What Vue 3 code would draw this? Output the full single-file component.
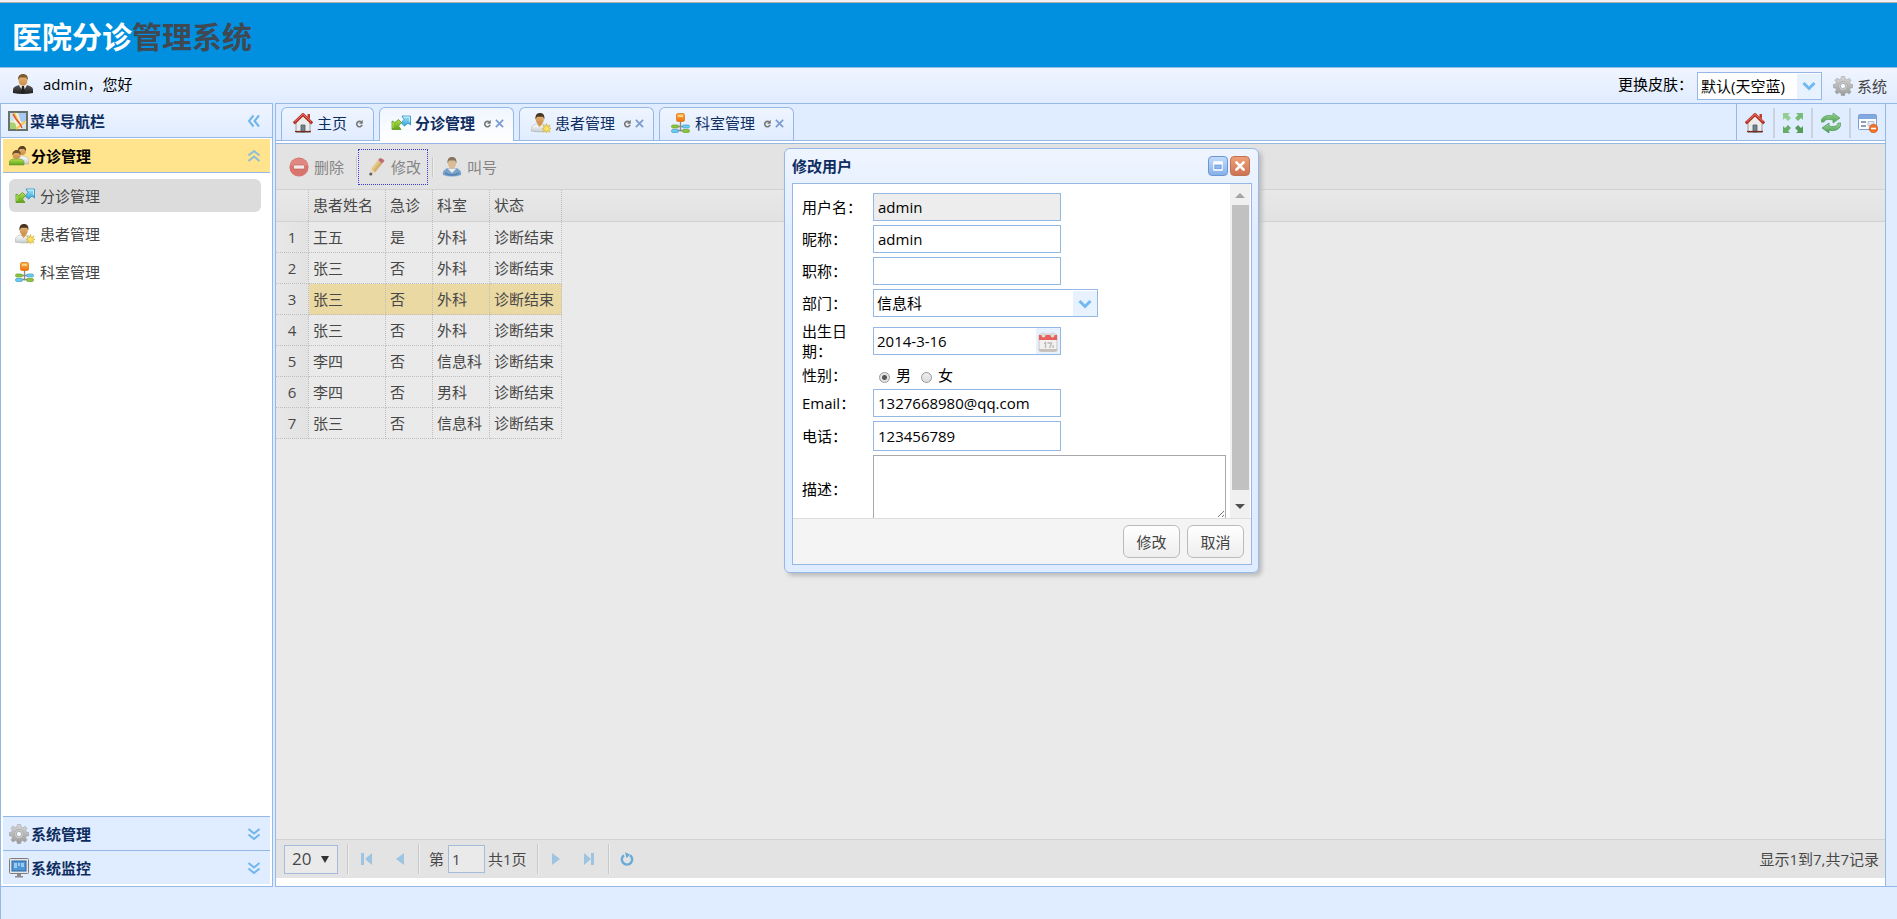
<script setup>
import { ref } from 'vue'

const menu = [
  { icon: 'arrows', label: '分诊管理', active: true },
  { icon: 'patient', label: '患者管理', active: false },
  { icon: 'depart', label: '科室管理', active: false },
]
const collapsed = [
  { icon: 'gear', label: '系统管理' },
  { icon: 'monitor', label: '系统监控' },
]
const tabs = [
  { icon: 'home', label: '主页', closable: false, active: false },
  { icon: 'arrows', label: '分诊管理', closable: true, active: true },
  { icon: 'patient', label: '患者管理', closable: true, active: false },
  { icon: 'depart', label: '科室管理', closable: true, active: false },
]
const tools = [
  { icon: 'home', label: '主页' },
  { icon: 'expand', label: '全屏' },
  { icon: 'refresh', label: '刷新' },
  { icon: 'closeall', label: '关闭' },
]
const rows = [
  ['王五', '是', '外科', '诊断结束'],
  ['张三', '否', '外科', '诊断结束'],
  ['张三', '否', '外科', '诊断结束'],
  ['张三', '否', '外科', '诊断结束'],
  ['李四', '否', '信息科', '诊断结束'],
  ['李四', '否', '男科', '诊断结束'],
  ['张三', '否', '信息科', '诊断结束'],
]
const selectedRow = 2
const form = ref({
  user: 'admin',
  nick: 'admin',
  title: '',
  birth: '2014-3-16',
  sex: 'm',
  email: '1327668980@qq.com',
  tel: '123456789',
  desc: '',
})
const page = ref('1')
</script>

<template>
  <div class="app">
    <svg class="defs" aria-hidden="true">
      <defs>
        <linearGradient id="gBlue" x1="0" y1="0" x2="0" y2="1"><stop offset="0" stop-color="#a9e4fa" /><stop offset="1" stop-color="#2fa4d8" /></linearGradient>
        <linearGradient id="gGreen" x1="0" y1="0" x2="0" y2="1"><stop offset="0" stop-color="#b4e04a" /><stop offset="1" stop-color="#5fa31c" /></linearGradient>
        <linearGradient id="gOrange" x1="0" y1="0" x2="0" y2="1"><stop offset="0" stop-color="#ffb648" /><stop offset="1" stop-color="#ee6f0c" /></linearGradient>
        <linearGradient id="gSuit" x1="0" y1="0" x2="0" y2="1"><stop offset="0" stop-color="#5a5a5a" /><stop offset="1" stop-color="#1c1c1c" /></linearGradient>
        <linearGradient id="gCoat" x1="0" y1="0" x2="0" y2="1"><stop offset="0" stop-color="#ffffff" /><stop offset="1" stop-color="#c3cbd0" /></linearGradient>
        <linearGradient id="gSkin" x1="0" y1="0" x2="0" y2="1"><stop offset="0" stop-color="#e8b878" /><stop offset="1" stop-color="#c98d48" /></linearGradient>
        <linearGradient id="gGear" x1="0" y1="0" x2="0" y2="1"><stop offset="0" stop-color="#d6d6d6" /><stop offset="1" stop-color="#9a9a9a" /></linearGradient>
        <linearGradient id="gSync" x1="0" y1="0" x2="0" y2="1"><stop offset="0" stop-color="#9bd39a" /><stop offset="1" stop-color="#4d9f50" /></linearGradient>
      </defs>
      <symbol id="i-admin" viewBox="0 0 20 20">
        <path d="M0 19v-3c0-3 3-4 6-5h8c3 1 6 2 6 5v3q-10 2-20 0z" fill="url(#gSuit)" />
        <path d="M6 11l4 7 4-7-4-1z" fill="#f4f4f4" /><path d="M9 12h2l1 5-2 2-2-2z" fill="#222" />
        <ellipse cx="10" cy="6.5" rx="4.400" ry="5.300" fill="url(#gSkin)" />
        <path d="M5.200 6C4.600 2 7 0 10 0s5.400 2 4.800 6L13 3.500H7z" fill="#7b5a2e" />
      </symbol>
      <symbol id="i-map" viewBox="0 0 20 20">
        <rect x="1" y="1" width="18" height="18" fill="#f5f1d8" stroke="#66736b" stroke-width="2" />
        <path d="M2 2h4v8H2z" fill="#cfe0ef" /><path d="M10 2h8v9h-5z" fill="#a9c9f0" /><path d="M2 11l5 1 2 6H2z" fill="#a9cf74" /><path d="M13 13l5-1v6h-5z" fill="#d9e3ee" />
        <path d="M18 10L8 18M6 2l5 10" stroke="#f6c850" stroke-width="2" fill="none" />
        <path d="M5 3l3 5 4 5 2 4" stroke="#e0563c" stroke-width="1.500" fill="none" />
      </symbol>
      <symbol id="i-users" viewBox="0 0 20 20">
        <path d="M9 17c-1-5 1-7 4-7s7 1 7 5v3H10z" fill="url(#gCoat)" stroke="#aaa" stroke-width=".6" />
        <circle cx="13" cy="5" r="4" fill="url(#gSkin)" /><path d="M8.800 5c0-3.500 2-5 4.500-5s4.300 2 3.700 5l-2-2h-4z" fill="#5c4224" />
        <path d="M0 19v-2c0-3 3-4 5-4h5c3 0 5 1 5 4v2z" fill="url(#gGreen)" stroke="#6c9430" stroke-width=".6" />
        <circle cx="7.500" cy="9" r="4" fill="url(#gSkin)" /><path d="M3.300 9c0-3.500 2-5 4.500-5s4.300 2 3.700 5l-2-2h-4z" fill="#6b4d29" />
      </symbol>
      <symbol id="i-arrows" viewBox="0 0 20 20">
        <path d="M11 3h8.500v9L17 10l-3.500 3-3.300-3L13 6.500z" fill="url(#gBlue)" stroke="#2a8fc0" stroke-width=".8" />
        <path d="M12.500 4h6v5" fill="none" stroke="#d2f2fd" stroke-width=".8" />
        <path d="M1 8l3 1.500L7.500 6.500l3 3L7.500 13l2.500 3.500H1z" fill="url(#gGreen)" stroke="#5b9a20" stroke-width=".8" />
        <path d="M2 9.500V15" fill="none" stroke="#c8ec74" stroke-width=".8" />
      </symbol>
      <symbol id="i-patient" viewBox="0 0 20 20">
        <path d="M0 18c-.5-4 2-6 5-7h7c3 1 5 3 4.500 7q-8 2-16.500 0z" fill="url(#gCoat)" stroke="#a9b0b4" stroke-width=".6" />
        <path d="M6 11l2.500 3 3-3z" fill="#d59a58" />
        <ellipse cx="8.800" cy="6.500" rx="4" ry="5" fill="url(#gSkin)" /><path d="M4.500 6.500C4 2 6 0 9 0s5 2 4.300 6.500L12 3.800H6z" fill="#4a3420" />
        <path d="M15.500 10.500l1 3 2.600-1.600-1.400 2.600 2.300 1-2.300 1 1.400 2.700-2.600-1.500-1 2.300-1-2.300-2.700 1.500 1.500-2.700-2.300-1 2.300-1-1.500-2.600 2.700 1.600z" fill="#fbe264" stroke="#c9a72b" stroke-width=".6" />
      </symbol>
      <symbol id="i-depart" viewBox="0 0 20 20">
        <path d="M9.500 8v10.500M5 13.500h9M5 17.500h9" stroke="#8a8a8a" stroke-width="1.300" fill="none" />
        <rect x="5.500" y=".5" width="8" height="8" rx="1.500" fill="url(#gOrange)" stroke="#e07a18" stroke-width=".8" />
        <path d="M7 2h5v2H7z" fill="#ffcf86" />
        <rect x=".5" y="12" width="7" height="3" rx="1.400" fill="#8cc43c" stroke="#6ea033" stroke-width=".7" />
        <rect x="11.500" y="12" width="7" height="3" rx="1.400" fill="#6ccbf0" stroke="#3f9dc8" stroke-width=".7" />
        <rect x=".5" y="16.500" width="7" height="3" rx="1.400" fill="#6ccbf0" stroke="#3f9dc8" stroke-width=".7" />
        <rect x="11.500" y="16.500" width="7" height="3" rx="1.400" fill="#8cc43c" stroke="#6ea033" stroke-width=".7" />
      </symbol>
      <symbol id="i-gear" viewBox="0 0 20 20">
        <path d="M8.300.5h3.400l.5 2.600 1.700.7L16.100 2.300l2 2-1.500 2.200.7 1.600 2.400.4v3.200l-2.400.5-.7 1.600 1.500 2.200-2.200 2.100-2.100-1.500-1.700.7-.5 2.400H8.400L7.900 17.300l-1.700-.7-2.200 1.500L1.900 16l1.500-2.200-.7-1.600L.3 11.700V8.500l2.400-.5.7-1.600L1.900 4.200 4.100 2.100l2.100 1.500 1.700-.7z" fill="url(#gGear)" stroke="#9a9a9a" stroke-width=".5" />
        <circle cx="10" cy="10" r="4.600" fill="#c9c9c9" stroke="#a2a2a2" stroke-width=".6" /><circle cx="10" cy="10" r="2.600" fill="#f4f8ff" stroke="#909090" stroke-width=".6" />
      </symbol>
      <symbol id="i-monitor" viewBox="0 0 20 20">
        <rect x=".5" y=".5" width="19" height="15" rx="1" fill="#e6e6e6" stroke="#7e7e7e" />
        <rect x="3" y="3" width="14" height="10" fill="#4f97d6" stroke="#2c67a6" /><path d="M5 5h3v5H5zM9 5h2v3H9zM12 5h3v4h-3z" fill="#9ccbf0" />
        <path d="M8 16h4v2h2v1.500H6V18h2z" fill="#8c8c8c" />
      </symbol>
      <symbol id="i-home" viewBox="0 0 20 20">
        <path d="M3 10l7-7 7 7v9.500H3z" fill="#ececec" stroke="#8a8a8a" stroke-width=".8" />
        <path d="M14.500 1H17v5l-2.500-2z" fill="#c43c2e" />
        <path d="M8 12h4v7H8z" fill="#73828c" stroke="#4f5a60" stroke-width=".8" />
        <path d="M2 18.500h16" stroke="#7a2a20" stroke-width="1.200" />
        <path d="M.8 10.300L10 1.500l9.200 8.800" fill="none" stroke="#b73327" stroke-width="3" stroke-linejoin="round" /><path d="M2 8.600L10 1.200l8 7.400" fill="none" stroke="#e9776a" stroke-width="1" />
      </symbol>
      <symbol id="i-expand" viewBox="0 0 20 20">
        <path d="M0 0h7L5 2l3 3-3 3-3-3-2 2z" fill="#93cf92" /><path d="M20 0h-7l2 2-3 3 3 3 3-3 2 2z" fill="#79bb79" />
        <path d="M0 20h7l-2-2 3-3-3-3-3 3-2-2z" fill="#66ae67" /><path d="M20 20h-7l2-2-3-3 3-3 3 3 2-2z" fill="#559d57" />
      </symbol>
      <symbol id="i-refresh" viewBox="0 0 20 20">
        <path d="M0 9c0-5 6-8 12-6V0l7 5-7 5V7C8 6 4 6 3 9z" fill="url(#gSync)" stroke="#5ba35d" stroke-width=".7" />
        <path d="M20 10c0 6-6 9-12 7v3l-7-5 7-5v3c4 1 8 1 9-3z" fill="url(#gSync)" stroke="#4b9350" stroke-width=".7" />
      </symbol>
      <symbol id="i-closeall" viewBox="0 0 20 20">
        <rect x=".5" y="1.500" width="18" height="15" rx="1" fill="#fbfcff" stroke="#7f9fce" /><path d="M1 2h17v4H1z" fill="#7fa9e0" />
        <path d="M3 9h5M3 13h5" stroke="#6f7f99" stroke-width="1.600" /><path d="M10 8.500h6v4h-6z" fill="#e3e8f2" stroke="#a5b3cb" stroke-width=".8" />
        <circle cx="15.500" cy="15.500" r="4.300" fill="#ef7028" stroke="#cf5310" stroke-width=".6" /><path d="M13 15.500h5" stroke="#fff" stroke-width="1.600" />
      </symbol>
      <symbol id="i-delete" viewBox="0 0 20 20">
        <circle cx="10" cy="10" r="9.600" fill="#d9746e" /><path d="M1 8a9.500 9.500 0 0118 0q-9 3-18 0z" fill="#e2908a" opacity=".7" />
        <rect x="4.500" y="8" width="11" height="4" rx="1" fill="#f3e9e8" stroke="#bb5c56" stroke-width=".6" />
      </symbol>
      <symbol id="i-pencil" viewBox="0 0 20 20">
        <path d="M4 12L11 3l4 3L8 15.500z" fill="#e6c680" /><path d="M6 13.500L13 4.500l2.500 2L8 15.500z" fill="#d6ad5e" />
        <path d="M11 3l2-2q3.500.5 4.500 3L15 6.500z" fill="#b9606a" /><path d="M4 12l4 3.500L3.500 18z" fill="#ead8b8" /><circle cx="3.800" cy="17" r="1.600" fill="#555" />
      </symbol>
      <symbol id="i-call" viewBox="0 0 20 20">
        <path d="M1 18c-1-4 2-6 5-7h8c3 1 6 3 5 7q-9 3-18 0z" fill="#6e9bcb" /><path d="M5.500 11.500L10 16l4.500-4.500z" fill="#f1efe9" />
        <path d="M3 16q7 4 14 0" fill="none" stroke="#4577ad" stroke-width="1.500" />
        <ellipse cx="10" cy="6.500" rx="4" ry="5.200" fill="#d8b78d" /><path d="M5.600 6.500C5 2 7 0 10 0s5 2 4.400 6.500L13 3.500H7z" fill="#7d6850" />
      </symbol>
      <symbol id="i-calendar" viewBox="0 0 20 20">
        <rect x="1" y="2" width="18" height="17.500" rx="1.500" fill="#f3f1ef" stroke="#c9c5c1" /><path d="M1 3h18v5H1z" fill="#e7605c" />
        <path d="M1 18h18" stroke="#c5c0bb" stroke-width="2" />
        <rect x="3.500" y="0" width="4" height="5.500" rx="2" fill="#d9d9d9" /><rect x="12.500" y="0" width="4" height="5.500" rx="2" fill="#d9d9d9" />
        <path d="M6 11.500l1.500-1V16M9.500 11h4L11.500 16M15 13v3" fill="none" stroke="#bdbab7" stroke-width="1.400" />
      </symbol>
      <symbol id="i-chev2" viewBox="0 0 14 14">
        <path d="M1.500 2l5.500 4.500L12.500 2M1.500 7.500L7 12l5.500-4.500" fill="none" stroke="#70b5ec" stroke-width="2" />
      </symbol>
      <symbol id="i-reload" viewBox="0 0 10 10">
        <path d="M7.800 6.500A3 3 0 117 3.500" fill="none" stroke="#777" stroke-width="1.800" /><path d="M8.600.8v4.400H4.400z" fill="#777" />
      </symbol>
      <symbol id="i-x" viewBox="0 0 10 10"><path d="M1 1l8 8M9 1L1 9" stroke="#7c9dd0" stroke-width="2" /></symbol>
      <symbol id="i-down" viewBox="0 0 14 10"><path d="M1.500 2L7 7.500 12.500 2" fill="none" stroke="#70b9f2" stroke-width="3" /></symbol>
    </svg>

    <header class="banner"><h1><span>医院分诊</span>管理系统</h1></header>

    <div class="userbar">
      <div class="user"><svg class="ic"><use href="#i-admin" /></svg><span>admin，您好</span></div>
      <label class="skin-label" for="skin">更换皮肤：</label>
      <span class="combo skin">
        <select id="skin"><option>默认(天空蓝)</option></select>
        <span class="combo-arrow"><svg><use href="#i-down" /></svg></span>
      </span>
      <button class="sys" type="button"><svg class="ic"><use href="#i-gear" /></svg>系统</button>
    </div>

    <div class="main">
      <aside class="west">
        <div class="west-head">
          <svg class="ic"><use href="#i-map" /></svg><span>菜单导航栏</span>
          <button type="button" class="chev left" aria-label="折叠"><svg><use href="#i-chev2" /></svg></button>
        </div>
        <div class="accordion">
          <div class="acc-head open">
            <svg class="ic"><use href="#i-users" /></svg><span>分诊管理</span>
            <button type="button" class="chev up" aria-label="收起"><svg><use href="#i-chev2" /></svg></button>
          </div>
          <nav class="menu">
            <a v-for="m in menu" :key="m.label" href="#" :class="{ active: m.active }">
              <svg class="ic"><use :href="'#i-' + m.icon" /></svg>{{ m.label }}
            </a>
          </nav>
          <div v-for="c in collapsed" :key="c.label" class="acc-head">
            <svg class="ic"><use :href="'#i-' + c.icon" /></svg><span>{{ c.label }}</span>
            <button type="button" class="chev" aria-label="展开"><svg><use href="#i-chev2" /></svg></button>
          </div>
        </div>
      </aside>

      <section class="center">
        <div class="tabbar">
          <div class="tabs">
            <div v-for="t in tabs" :key="t.label" class="tab" :class="{ active: t.active }">
              <svg class="ic"><use :href="'#i-' + t.icon" /></svg><span>{{ t.label }}</span>
              <button type="button" class="mini" aria-label="刷新"><svg><use href="#i-reload" /></svg></button>
              <button v-if="t.closable" type="button" class="mini close" aria-label="关闭"><svg><use href="#i-x" /></svg></button>
            </div>
          </div>
          <div class="tools">
            <button v-for="t in tools" :key="t.label" type="button" :aria-label="t.label"><svg class="ic"><use :href="'#i-' + t.icon" /></svg></button>
          </div>
        </div>

        <div class="workspace">
          <div class="toolbar">
            <button type="button"><svg class="ic"><use href="#i-delete" /></svg>删除</button>
            <i class="sep"></i>
            <button type="button" class="focused"><svg class="ic"><use href="#i-pencil" /></svg>修改</button>
            <i class="sep"></i>
            <button type="button"><svg class="ic"><use href="#i-call" /></svg>叫号</button>
          </div>
          <div class="grid-head">
            <table>
              <colgroup><col class="c0" /><col class="c1" /><col class="c2" /><col class="c3" /><col class="c4" /></colgroup>
              <thead><tr><th></th><th>患者姓名</th><th>急诊</th><th>科室</th><th>状态</th></tr></thead>
            </table>
          </div>
          <div class="grid-body">
            <table>
              <colgroup><col class="c0" /><col class="c1" /><col class="c2" /><col class="c3" /><col class="c4" /></colgroup>
              <tbody>
                <tr v-for="(r, i) in rows" :key="i" :class="{ selected: i === selectedRow }">
                  <td class="num">{{ i + 1 }}</td>
                  <td v-for="(c, j) in r" :key="j">{{ c }}</td>
                </tr>
              </tbody>
            </table>
          </div>
          <div class="pager">
            <span class="size"><select aria-label="每页条数"><option>20</option></select><i></i></span>
            <i class="sep"></i>
            <button type="button" aria-label="首页"><svg viewBox="0 0 12 14"><path d="M0 1h3v12H0zM11 1v12L4 7z" /></svg></button>
            <button type="button" aria-label="上一页"><svg viewBox="0 0 12 14"><path d="M10 1v12L2 7z" /></svg></button>
            <i class="sep"></i>
            <label for="pg">第</label><input id="pg" v-model="page" type="text" /><span class="total">共1页</span>
            <i class="sep"></i>
            <button type="button" aria-label="下一页"><svg viewBox="0 0 12 14"><path d="M2 1v12l8-6z" /></svg></button>
            <button type="button" aria-label="末页"><svg viewBox="0 0 12 14"><path d="M1 1v12l7-6zM8 1h3v12H8z" /></svg></button>
            <i class="sep"></i>
            <button type="button" aria-label="刷新" class="reload"><svg viewBox="0 0 14 14"><path d="M4 3.200A5.200 5.200 0 1010 3.200" fill="none" stroke="#68abd9" stroke-width="2.400" /><path d="M5 .2l5 2.400-3.500 3.600z" fill="#68abd9" /></svg></button>
            <span class="info">显示1到7,共7记录</span>
          </div>
        </div>

        <form class="dialog" role="dialog" aria-label="修改用户" @submit.prevent>
          <div class="dlg-head">
            <span>修改用户</span>
            <button type="button" class="wbtn" aria-label="最大化"><svg viewBox="0 0 20 20"><rect x="5.500" y="5.500" width="9" height="9" fill="#f7fbff" stroke="#fff" stroke-width="1.500" /><rect x="6.500" y="9" width="7" height="4" fill="#8fb8ee" stroke="#6e9bdc" /></svg></button>
            <button type="button" class="wbtn red" aria-label="关闭"><svg viewBox="0 0 20 20"><path d="M6 6l8 8M14 6l-8 8" stroke="#fff" stroke-width="3" stroke-linecap="round" /></svg></button>
          </div>
          <div class="dlg-frame">
            <div class="dlg-body">
              <div class="fields">
                <label for="f1">用户名：</label><input id="f1" v-model="form.user" type="text" readonly />
                <label for="f2">昵称：</label><input id="f2" v-model="form.nick" type="text" />
                <label for="f3">职称：</label><input id="f3" v-model="form.title" type="text" />
                <label for="f4">部门：</label>
                <span class="combo dept">
                  <select id="f4"><option>信息科</option></select>
                  <span class="combo-arrow"><svg><use href="#i-down" /></svg></span>
                </span>
                <label for="f5" class="two">出生日期：</label>
                <span class="date"><input id="f5" v-model="form.birth" type="text" /><button type="button" aria-label="选择日期"><svg><use href="#i-calendar" /></svg></button></span>
                <span>性别：</span>
                <span class="radios"><label><input v-model="form.sex" type="radio" name="sex" value="m" />男</label><label><input v-model="form.sex" type="radio" name="sex" value="f" />女</label></span>
                <label for="f6">Email：</label><input id="f6" v-model="form.email" type="text" />
                <label for="f7">电话：</label><input id="f7" v-model="form.tel" type="text" class="tall" />
                <label for="f8">描述：</label><textarea id="f8" v-model="form.desc"></textarea>
              </div>
              <div class="scroll" aria-hidden="true"><i class="up"></i><b></b><i class="down"></i></div>
              <svg class="grip" viewBox="0 0 8 8" aria-hidden="true"><path d="M1 7L7 1M5 7l2-2" stroke="#777" /></svg>
            </div>
            <div class="dlg-foot"><button type="submit">修改</button><button type="button">取消</button></div>
          </div>
        </form>
      </section>
      <div class="east"></div>
    </div>
    <footer class="south"></footer>
  </div>
</template>

<style>
body {
  margin: 0;
}
</style>

<style scoped>
.app {
  display: flex;
  flex-direction: column;
  min-height: 100vh;
  background: #e0ecff;
  color: #000;
  font: 15px/20px "Open Sans", "Noto Sans CJK SC", sans-serif;
}
.app *,
.app *::before,
.app *::after {
  box-sizing: border-box;
}
button,
input,
select,
textarea {
  margin: 0;
  color: inherit;
  font: inherit;
}
button {
  padding: 0;
  border: 0;
  background: none;
}
svg {
  display: block;
  flex: none;
}
.defs {
  position: absolute;
  width: 0;
  height: 0;
}
.ic {
  width: 20px;
  height: 20px;
}
.banner {
  height: 67px;
  border-top: 2px solid #f1f1f1;
  background: #0190e0;
  box-shadow: inset 0 1px #b5b0b0;
  padding: 13px 12px;
}
.banner h1 {
  margin: 0;
  font-size: 30px;
  line-height: 44px;
  font-weight: bold;
  color: #404852;
}
.banner h1 span {
  color: #fff;
}
.userbar {
  display: flex;
  align-items: center;
  height: 36px;
  padding: 0 10px 0 13px;
  border-top: 1px solid #95b8e7;
  background: linear-gradient(#eff5ff, #e0ecff);
}
.user {
  display: flex;
  flex: 1;
  gap: 10px;
  padding-bottom: 3px;
}
.skin-label {
  padding-bottom: 3px;
}
.combo {
  display: flex;
  height: 28px;
  border: 1px solid #95b8e7;
  background: #fff;
}
.combo select {
  flex: 1;
  min-width: 0;
  padding: 0 3px;
  border: 0;
  background: none;
  appearance: none;
  outline: none;
}
.combo-arrow {
  display: flex;
  align-items: center;
  justify-content: center;
  width: 24px;
  margin-top: 1px;
  background: #e8f1fe;
  pointer-events: none;
}
.combo-arrow svg {
  width: 14px;
  height: 10px;
}
.skin {
  width: 125px;
  margin-left: 4px;
}
.sys {
  display: flex;
  align-items: center;
  gap: 4px;
  margin-left: 11px;
  color: #444;
}
.main {
  display: flex;
  flex: 1;
}
.west {
  display: flex;
  flex-direction: column;
  width: 273px;
  border: 1px solid #95b8e7;
}
.west-head {
  display: flex;
  align-items: center;
  gap: 2px;
  height: 34px;
  padding: 0 11px 0 7px;
  border-bottom: 1px solid #95b8e7;
  background: linear-gradient(#eff5ff, #e0ecff);
  color: #0e2d5f;
  font-weight: bold;
}
.west-head span,
.acc-head span {
  flex: 1;
}
.chev svg {
  width: 14px;
  height: 14px;
}
.chev.left svg {
  transform: rotate(90deg);
}
.chev.up svg {
  transform: rotate(180deg);
}
.accordion {
  display: flex;
  flex: 1;
  flex-direction: column;
  padding: 1px 2px 2px;
  background: #fff;
}
.acc-head {
  display: flex;
  align-items: center;
  gap: 2px;
  height: 34px;
  padding: 0 9px 0 6px;
  border-top: 1px solid #95b8e7;
  background: #e0ecff;
  color: #0e2d5f;
  font-weight: bold;
}
.acc-head.open {
  border-top: 0;
  border-bottom: 1px solid #95b8e7;
  background: #ffe48d;
  color: #000;
}
.acc-head.open .chev {
  opacity: 0.8;
}
.menu {
  display: flex;
  flex: 1;
  flex-direction: column;
  gap: 5px;
  padding: 6px 9px 6px 6px;
}
.menu a {
  display: flex;
  align-items: center;
  gap: 5px;
  height: 33px;
  padding: 0 6px;
  border-radius: 6px;
  color: #444;
  text-decoration: none;
}
.menu a.active {
  background: #dcdcdc;
}
.center {
  position: relative;
  display: flex;
  flex: 1;
  flex-direction: column;
  min-width: 0;
  margin-left: 2px;
  padding-bottom: 8px;
  border: 1px solid #95b8e7;
  background: #fff;
}
.tabbar {
  display: flex;
  justify-content: space-between;
  height: 40px;
  padding-bottom: 2px;
  border-bottom: 1px solid #95b8e7;
}
.tabs {
  display: flex;
  flex: 1;
  gap: 5px;
  padding: 3px 5px 0;
  border-bottom: 1px solid #95b8e7;
  background: #e0ecff;
}
.tab {
  display: flex;
  align-items: center;
  height: 33px;
  padding: 0 9px 2px 11px;
  border: 1px solid #95b8e7;
  border-bottom: 0;
  border-radius: 6px 6px 0 0;
  background: linear-gradient(#eff5ff, #e0ecff);
  color: #0e2d5f;
}
.tab.active {
  height: 34px;
  padding-bottom: 3px;
  background: linear-gradient(#eff5ff, #fff);
  font-weight: bold;
}
.tab span {
  margin: 0 8px 0 4px;
}
.mini svg {
  width: 9px;
  height: 9px;
}
.mini.close {
  margin-left: 3px;
}
.tools {
  display: flex;
  padding: 4px 0 0;
  border-left: 1px solid #95b8e7;
  border-bottom: 1px solid #95b8e7;
  background: #e0ecff;
}
.tools button {
  display: flex;
  align-items: center;
  justify-content: center;
  width: 38px;
  height: 30px;
  border-left: 2px solid #ccd2dc;
}
.tools button:first-child {
  width: 36px;
  border-left: 0;
}
.tools button:last-child {
  width: 36px;
}
.workspace {
  display: flex;
  flex: 1;
  flex-direction: column;
  background: #eaeaea;
  color: #484848;
}
.toolbar {
  display: flex;
  align-items: center;
  height: 46px;
  padding: 0 5px;
  border-bottom: 1px solid #d2d2d2;
  background: #e3e3e3;
}
.toolbar button {
  display: flex;
  align-items: center;
  gap: 5px;
  height: 36px;
  padding: 0 8px;
  color: #858585;
}
.toolbar .focused {
  gap: 4px;
  padding: 0 6px 0 8px;
  border: 1px dotted #3b3bd6;
}
.toolbar .sep + button .ic {
  opacity: 0.9;
}
.sep {
  width: 2px;
  height: 30px;
  border-left: 1px solid #c8c8c8;
  border-right: 1px solid #eee;
}
.toolbar .sep {
  height: 20px;
  margin: 0 0 0 4px;
}
.grid-head {
  height: 32px;
  border-bottom: 1px solid #d2d2d2;
  background: linear-gradient(#e8e8e8, #e2e2e2);
}
.grid-body {
  flex: 1;
}
table {
  table-layout: fixed;
  width: 286px;
  border-collapse: separate;
  border-spacing: 0;
}
.c0 {
  width: 33px;
}
.c1 {
  width: 77px;
}
.c2 {
  width: 47px;
}
.c3 {
  width: 57px;
}
.c4 {
  width: 72px;
}
th,
td {
  height: 31px;
  padding: 0 0 1px 4px;
  border-right: 1px dotted #bdbdbd;
  text-align: left;
  font-weight: normal;
  white-space: nowrap;
}
td {
  border-bottom: 1px dotted #bdbdbd;
}
.num {
  padding: 0 0 1px;
  text-align: center;
  background: linear-gradient(90deg, #e8e8e8, #e2e2e2);
}
.selected td:not(.num) {
  background: #ebd9a4;
}
.pager {
  display: flex;
  align-items: center;
  height: 39px;
  padding: 0 6px 0 8px;
  border-top: 1px solid #d2d2d2;
  background: #e3e3e3;
}
.pager button {
  display: flex;
  align-items: center;
  justify-content: center;
  width: 33px;
  height: 30px;
}
.pager button svg {
  width: 12px;
  height: 14px;
  fill: #9dc4e0;
}
.pager .reload svg {
  width: 14px;
}
.pager .sep {
  margin: 0 1px 0 2px;
}
.size {
  display: flex;
  align-items: center;
  width: 54px;
  height: 29px;
  margin-right: 7px;
  border: 1px solid #a6bbdb;
  background: #eaeaea;
}
.size select {
  flex: 1;
  min-width: 0;
  padding: 0 0 0 7px;
  border: 0;
  background: none;
  appearance: none;
  outline: none;
  font-size: 17px;
}
.size i {
  margin-right: 8px;
  border: 4px solid transparent;
  border-top: 7px solid #333;
  border-bottom: 0;
}
.pager label {
  margin: 0 4px 0 8px;
}
.pager input {
  width: 37px;
  height: 28px;
  padding: 0 3px;
  border: 1px solid #a6bbdb;
  background: #eaeaea;
}
.total {
  margin: 0 8px 0 3px;
}
.info {
  margin-left: auto;
}
.east {
  width: 11px;
  border-top: 1px solid #95b8e7;
  border-bottom: 1px solid #95b8e7;
}
.south {
  height: 32px;
  border-left: 1px solid #95b8e7;
}
.dialog {
  position: absolute;
  left: 508px;
  top: 44px;
  width: 475px;
  padding: 0 6px 7px 7px;
  border: 1px solid #95b8e7;
  border-radius: 6px;
  background: linear-gradient(#eff5ff, #e0ecff 20%);
  box-shadow: 3px 3px 4px #bbb;
}
.dlg-head {
  display: flex;
  align-items: center;
  gap: 2px;
  height: 34px;
  color: #0e2d5f;
  font-weight: bold;
}
.dlg-head span {
  flex: 1;
  padding-bottom: 1px;
}
.wbtn {
  width: 20px;
  height: 20px;
  border: 1px solid #6a97d6;
  border-radius: 4px;
  background: linear-gradient(#c3dbfa, #86b0ea);
}
.wbtn svg {
  width: 18px;
  height: 18px;
}
.wbtn.red {
  margin-right: 2px;
  border-color: #bf7155;
  background: linear-gradient(#f0a078, #cd7355);
}
.dlg-frame {
  border: 1px solid #95b8e7;
}
.dlg-body {
  position: relative;
  display: flex;
  height: 334px;
  overflow: hidden;
  background: #fff;
}
.fields {
  display: grid;
  flex: 1;
  grid-template-columns: 71px 1fr;
  grid-template-rows: 28px 28px 28px 28px 40px 20px 28px 30px 68px;
  row-gap: 4px;
  align-items: center;
  padding: 9px 4px 0 9px;
}
.fields > label,
.fields > span:not([class]) {
  white-space: nowrap;
}
.fields > .two {
  width: 48px;
  white-space: normal;
}
.fields input[type="text"] {
  width: 188px;
  height: 28px;
  padding: 0 4px;
  border: 1px solid #95b8e7;
  background: #fff;
  outline: none;
}
.fields input[readonly] {
  background: #ededed;
}
.fields input.tall {
  height: 30px;
}
.dept {
  width: 225px;
}
.date {
  display: flex;
  width: 188px;
  height: 28px;
  border: 1px solid #95b8e7;
}
.fields .date input {
  flex: 1;
  min-width: 0;
  height: 26px;
  padding: 0 3px;
  border: 0;
}
.date button {
  width: 24px;
  padding: 3px 2px 2px;
  background: #e8f1fe;
}
.date button svg {
  width: 20px;
  height: 20px;
}
.radios {
  display: flex;
  gap: 10px;
  padding-left: 6px;
}
.radios label {
  display: flex;
  align-items: center;
  gap: 6px;
}
.radios input {
  width: 11px;
  height: 11px;
  margin-top: 4px;
  border: 1px solid #999;
  border-radius: 50%;
  background: linear-gradient(#eee, #dcdcdc);
  appearance: none;
}
.radios input:checked {
  background: radial-gradient(circle, #555 2px, #e4e4e4 3px);
}
.fields textarea {
  width: 100%;
  height: 68px;
  border: 1px solid #a9a9a9;
  background: #fff;
  resize: none;
  outline: none;
}
.grip {
  position: absolute;
  right: 26px;
  bottom: 0;
  width: 8px;
  height: 8px;
}
.scroll {
  display: flex;
  flex-direction: column;
  align-items: center;
  width: 20px;
  margin-right: 1px;
  background: #f0f0f0;
}
.scroll b {
  width: 17px;
  flex: 1;
  background: #c1c1c1;
}
.scroll i {
  border: 5px solid transparent;
}
.scroll .up {
  margin: 9px 0 7px;
  border-top: 0;
  border-bottom-color: #a3a3a3;
}
.scroll .down {
  margin: 14px 0 9px;
  border-bottom: 0;
  border-top-color: #505050;
}
.dlg-foot {
  display: flex;
  justify-content: flex-end;
  gap: 7px;
  height: 46px;
  padding: 6px 7px;
  border-top: 1px solid #ddd;
  background: #f4f4f4;
}
.dlg-foot button {
  width: 57px;
  height: 33px;
  border: 1px solid #bbb;
  border-radius: 6px;
  background: linear-gradient(#fff, #eee);
  color: #444;
}
</style>
